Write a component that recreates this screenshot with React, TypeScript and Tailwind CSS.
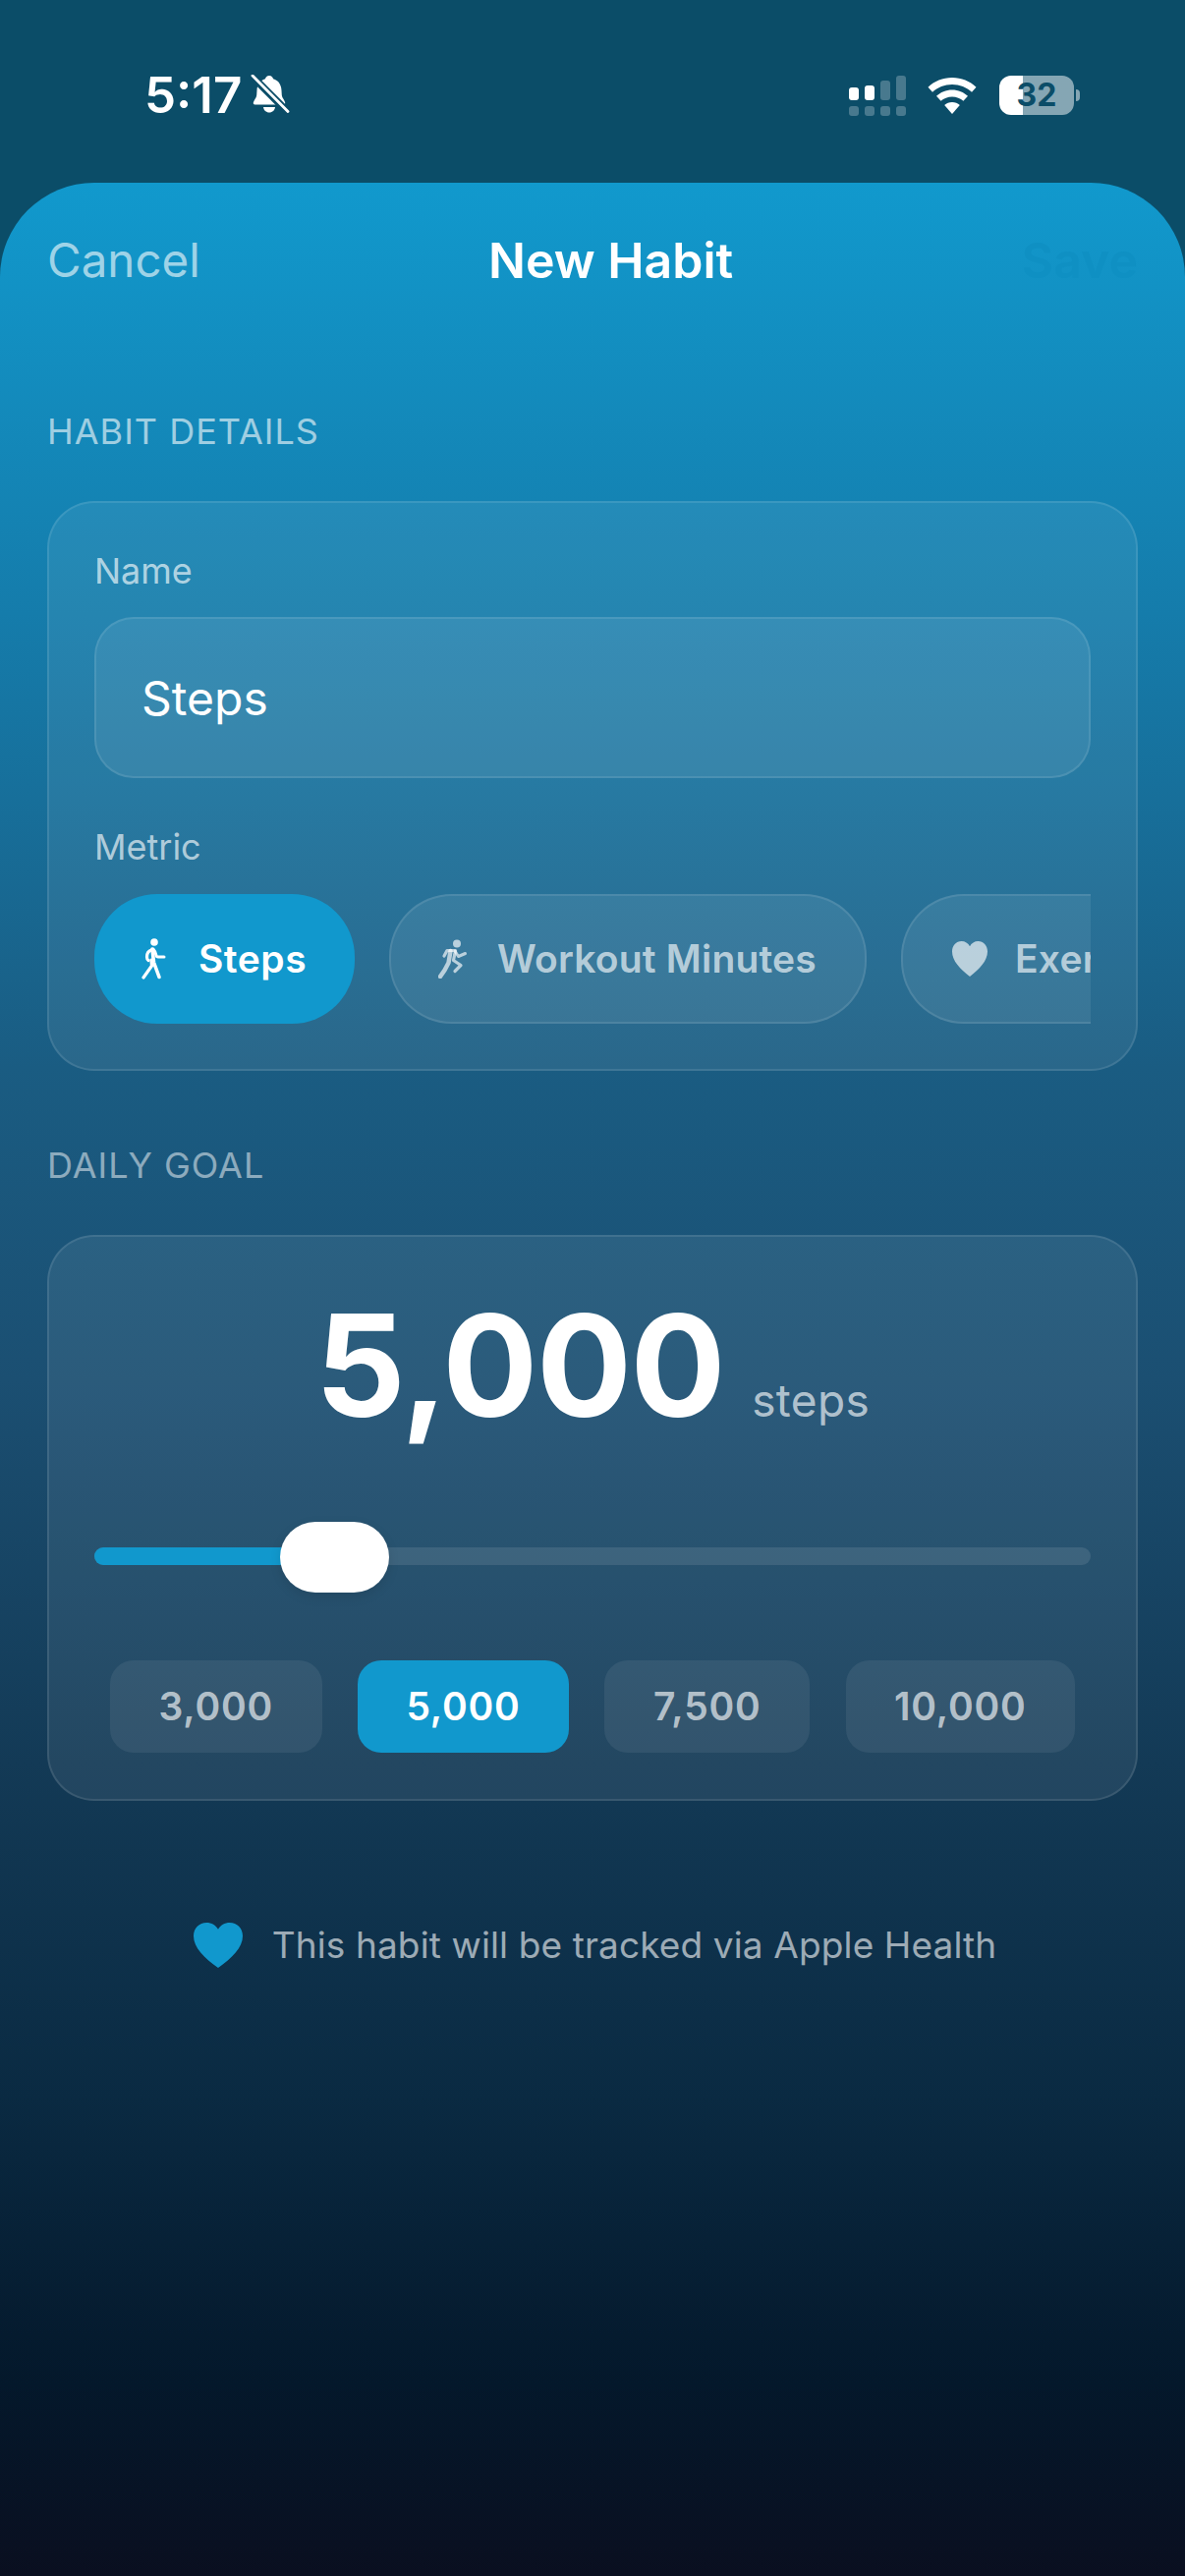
import React from "react";

const font = { fontFamily: "Inter, 'Noto Sans', sans-serif" };

function BellSlash() {
  return (
    <svg width="40" height="42" viewBox="0 0 40 42" fill="none">
      <path d="M19 1c2.200 0 3.700 1.500 4 3.300 5.500 1.500 8.200 6 8.500 11.700l.3 5c.2 2.500 3 5 3.400 7.500.2 1.300-.6 2-1.700 2H4.500c-1.200 0-1.900-.7-1.700-2 .5-2.500 3.200-5 3.400-7.500l.3-5C6.800 10.300 9.500 5.800 15 4.300 15.300 2.500 16.800 1 19 1z" fill="#fff" />
      <path d="M13 33h12c-.4 3.200-2.800 5.500-6 5.500S13.400 36.200 13 33z" fill="#fff" />
      <path d="M1.500 1.500l36 36" stroke="#0b4d68" strokeWidth="7.500" />
      <path d="M2 1l36 36.500" stroke="#fff" strokeWidth="2.800" strokeLinecap="round" />
    </svg>
  );
}

function Signal() {
  const dim = "#ffffff40";
  return (
    <svg width="60" height="41" viewBox="0 0 60 41">
      <rect x="0" y="12" width="10" height="13" rx="3" fill="#fff" />
      <rect x="16" y="10" width="10" height="15" rx="3" fill="#fff" />
      <rect x="32" y="5" width="10" height="20" rx="3" fill={dim} />
      <rect x="48" y="0" width="10" height="25" rx="3" fill={dim} />
      {[0, 16, 32, 48].map((x) => (
        <rect key={x} x={x} y="31" width="10" height="10" rx="3" fill={dim} />
      ))}
    </svg>
  );
}

function Wifi() {
  return (
    <svg width="50" height="37" viewBox="0 0 50 37">
      <path d="M25 0c9.500 0 18 3.600 24.500 9.700L45 14.800C39.800 10 32.700 7 25 7S10.200 10 5 14.800L.5 9.700C7 3.600 15.500 0 25 0z" fill="#fff" />
      <path d="M25 12.500c6.200 0 11.800 2.400 16 6.300l-4.600 5C33.500 21.100 29.400 19.500 25 19.500s-8.500 1.600-11.400 4.300l-4.600-5c4.200-3.900 9.800-6.300 16-6.300z" fill="#fff" />
      <path d="M25 25c3 0 5.800 1.100 7.800 3L25 37l-7.800-9c2-1.900 4.800-3 7.800-3z" fill="#fff" />
    </svg>
  );
}

function Walk({ color }: { color: string }) {
  return (
    <svg width="26" height="42" viewBox="0 0 26 42" fill="none">
      <circle cx="13" cy="4" r="3.800" fill={color} />
      <path d="M10 12c-3 1-4.500 4-4.500 7 0 1.500.5 3 1.500 3.500" stroke={color} strokeWidth="3.200" strokeLinecap="round" />
      <path d="M12 11c1.500 1.500 2.500 4 3 6.500.2 1 1 1.500 2 1.500h6" stroke={color} strokeWidth="3" strokeLinecap="round" strokeLinejoin="round" />
      <path d="M11 11l1.500 13.500L18 39.500" stroke={color} strokeWidth="3.600" strokeLinecap="round" strokeLinejoin="round" />
      <path d="M10 22l.5 6L2 40" stroke={color} strokeWidth="3.200" strokeLinecap="round" strokeLinejoin="round" />
    </svg>
  );
}

function Run({ color }: { color: string }) {
  return (
    <svg width="30" height="40" viewBox="0 0 30 40" fill="none">
      <circle cx="19" cy="4.500" r="4" fill={color} />
      <path d="M6 17l3-5.500h8.500l-2 10 7.500 5-6 6" stroke={color} strokeWidth="3.200" strokeLinecap="round" strokeLinejoin="round" />
      <path d="M17 12l3.500 5.500 7-3" stroke={color} strokeWidth="3" strokeLinecap="round" strokeLinejoin="round" />
      <path d="M12.500 12l-2 12-4 7.500L2 38" stroke={color} strokeWidth="4.500" strokeLinecap="round" strokeLinejoin="round" />
    </svg>
  );
}

function Heart({ color, w, h }: { color: string; w: number; h: number }) {
  return (
    <svg width={w} height={h} viewBox="0 0 36 36" preserveAspectRatio="none">
      <path d="M18 36C8 28 0 20 0 10.500 0 4.500 4.200 0 9.500 0 13.200 0 16.300 2 18 5.300 19.700 2 22.800 0 26.500 0 31.800 0 36 4.500 36 10.500 36 20 28 28 18 36z" fill={color} />
    </svg>
  );
}

function Preset({ label, active }: { label: string; active?: boolean }) {
  return (
    <div
      className={
        active
          ? "h-[94px] px-[49.500px] flex items-center rounded-[24px] bg-[#1198cd] text-white text-[39px] tracking-[0.8px] font-semibold"
          : "h-[94px] px-[49.500px] flex items-center rounded-[24px] bg-[#ffffff12] text-[#ffffffa6] text-[39px] tracking-[0.8px] font-semibold"
      }
    >
      {label}
    </div>
  );
}

export default function App() {
  return (
    <div
      style={font}
      className="w-[1206px] h-[2622px] flex flex-col overflow-hidden bg-[#0b4d68] text-white"
    >
      {/* status bar */}
      <div className="h-[186px] flex items-start justify-between pl-[147px] pr-[107px] pt-[72px] shrink-0">
        <div className="flex items-center gap-[9px] h-[50px]">
          <span className="text-[51px] leading-[50px] font-semibold">5:17</span>
          <BellSlash />
        </div>
        <div className="flex items-start gap-[20px] pt-[5px]">
          <Signal />
          <div className="pt-[2px]">
            <Wifi />
          </div>
          <div className="flex items-center gap-[2px] ml-[3px]">
            <div className="w-[76px] h-[40px] rounded-[12px] bg-[linear-gradient(90deg,#ffffff_32%,#ffffff80_32%)] flex items-center justify-center text-[32px] leading-[40px] font-bold text-[#0b4d68]">
              32
            </div>
            <div className="w-[4px] h-[12px] rounded-r-full bg-[#ffffff80]" />
          </div>
        </div>
      </div>

      {/* sheet */}
      <div className="flex-1 rounded-t-[96px] px-[48px] flex flex-col bg-[linear-gradient(180deg,#1199cd_0%,#157cab_18%,#1a5c82_37%,#1b4f72_50%,#133a56_66%,#0a2a42_80%,#04182b_92%,#0a0f20_100%)]">
        <div className="relative h-[158px] flex items-center justify-between shrink-0">
          <span className="text-[47.500px] leading-[58px] text-[#ffffff99]">Cancel</span>
          <span className="absolute left-[449px] top-[50px] text-[50px] leading-[58px] font-semibold">New Habit</span>
          <span className="text-[50px] leading-[58px] font-semibold text-[#0f90c3]">Save</span>
        </div>

        <div className="mt-[73px] text-[36px] leading-[44px] tracking-[1px] text-[#ffffff99]">HABIT DETAILS</div>

        <div className="mt-[49px] h-[580px] rounded-[48px] border-2 border-[#ffffff1a] bg-[#ffffff12] px-[46px] shrink-0">
          <div className="mt-[47px] text-[36px] leading-[44px] text-[#ffffffa6]">Name</div>
          <div className="mt-[25px] h-[164px] rounded-[40px] border-2 border-[#ffffff1a] bg-[#ffffff14] flex items-center px-[46px] pt-[2px] text-[48px] text-white">
            Steps
          </div>
          <div className="mt-[48px] text-[36px] leading-[44px] text-[#ffffffa6]">Metric</div>
          <div className="mt-[26px] flex gap-[35px] overflow-hidden">
            <div className="h-[132px] w-[265px] shrink-0 rounded-[64px] bg-[#1198cd] flex items-center pl-[48px] gap-[32px]">
              <Walk color="#ffffff" />
              <span className="text-[39px] tracking-[0.5px] font-semibold">Steps</span>
            </div>
            <div className="h-[132px] w-[486px] shrink-0 rounded-[64px] border-2 border-[#ffffff1a] bg-[#ffffff14] flex items-center pl-[48px] gap-[30px] text-[#ffffffa6]">
              <Run color="#ffffffa6" />
              <span className="text-[39px] tracking-[0.2px] font-semibold whitespace-nowrap">Workout Minutes</span>
            </div>
            <div className="h-[132px] w-[400px] shrink-0 rounded-[64px] border-2 border-[#ffffff1a] bg-[#ffffff14] flex items-center pl-[50px] gap-[28px] text-[#ffffffa6]">
              <Heart color="#ffffffa6" w={36} h={36} />
              <span className="text-[39px] tracking-[0.2px] font-semibold whitespace-nowrap">Exercise</span>
            </div>
          </div>
        </div>

        <div className="mt-[74px] text-[36px] leading-[44px] tracking-[1px] text-[#ffffff80]">DAILY GOAL</div>

        <div className="mt-[49px] h-[576px] rounded-[48px] border-2 border-[#ffffff1a] bg-[#ffffff12] px-[46px] shrink-0">
          <div className="mt-[46px] flex items-baseline justify-center gap-[28px]">
            <span className="text-[144px] leading-[170px] font-bold tracking-[-1.500px]">5,000</span>
            <span className="text-[46px] tracking-[0.4px] text-[#ffffffa6]">steps</span>
          </div>
          <div className="relative mt-[100px] h-[18px] rounded-full bg-[#ffffff1a]">
            <div className="h-[18px] w-[200px] rounded-l-full bg-[#1198cd]" />
            <div className="absolute left-[189px] top-[-26px] w-[111px] h-[72px] rounded-[36px] bg-white shadow-[0_4px_12px_rgba(0,0,0,0.1)]" />
          </div>
          <div className="mt-[97px] px-[16px] flex justify-between">
            <Preset label="3,000" />
            <Preset label="5,000" active />
            <Preset label="7,500" />
            <Preset label="10,000" />
          </div>
        </div>

        <div className="mt-[124px] ml-[5px] flex items-center justify-center gap-[30px]">
          <Heart color="#1198cd" w={50} h={46} />
          <span className="text-[37px] tracking-[0.130px] leading-[46px] text-[#ffffff99]">This habit will be tracked via Apple Health</span>
        </div>
      </div>
    </div>
  );
}
